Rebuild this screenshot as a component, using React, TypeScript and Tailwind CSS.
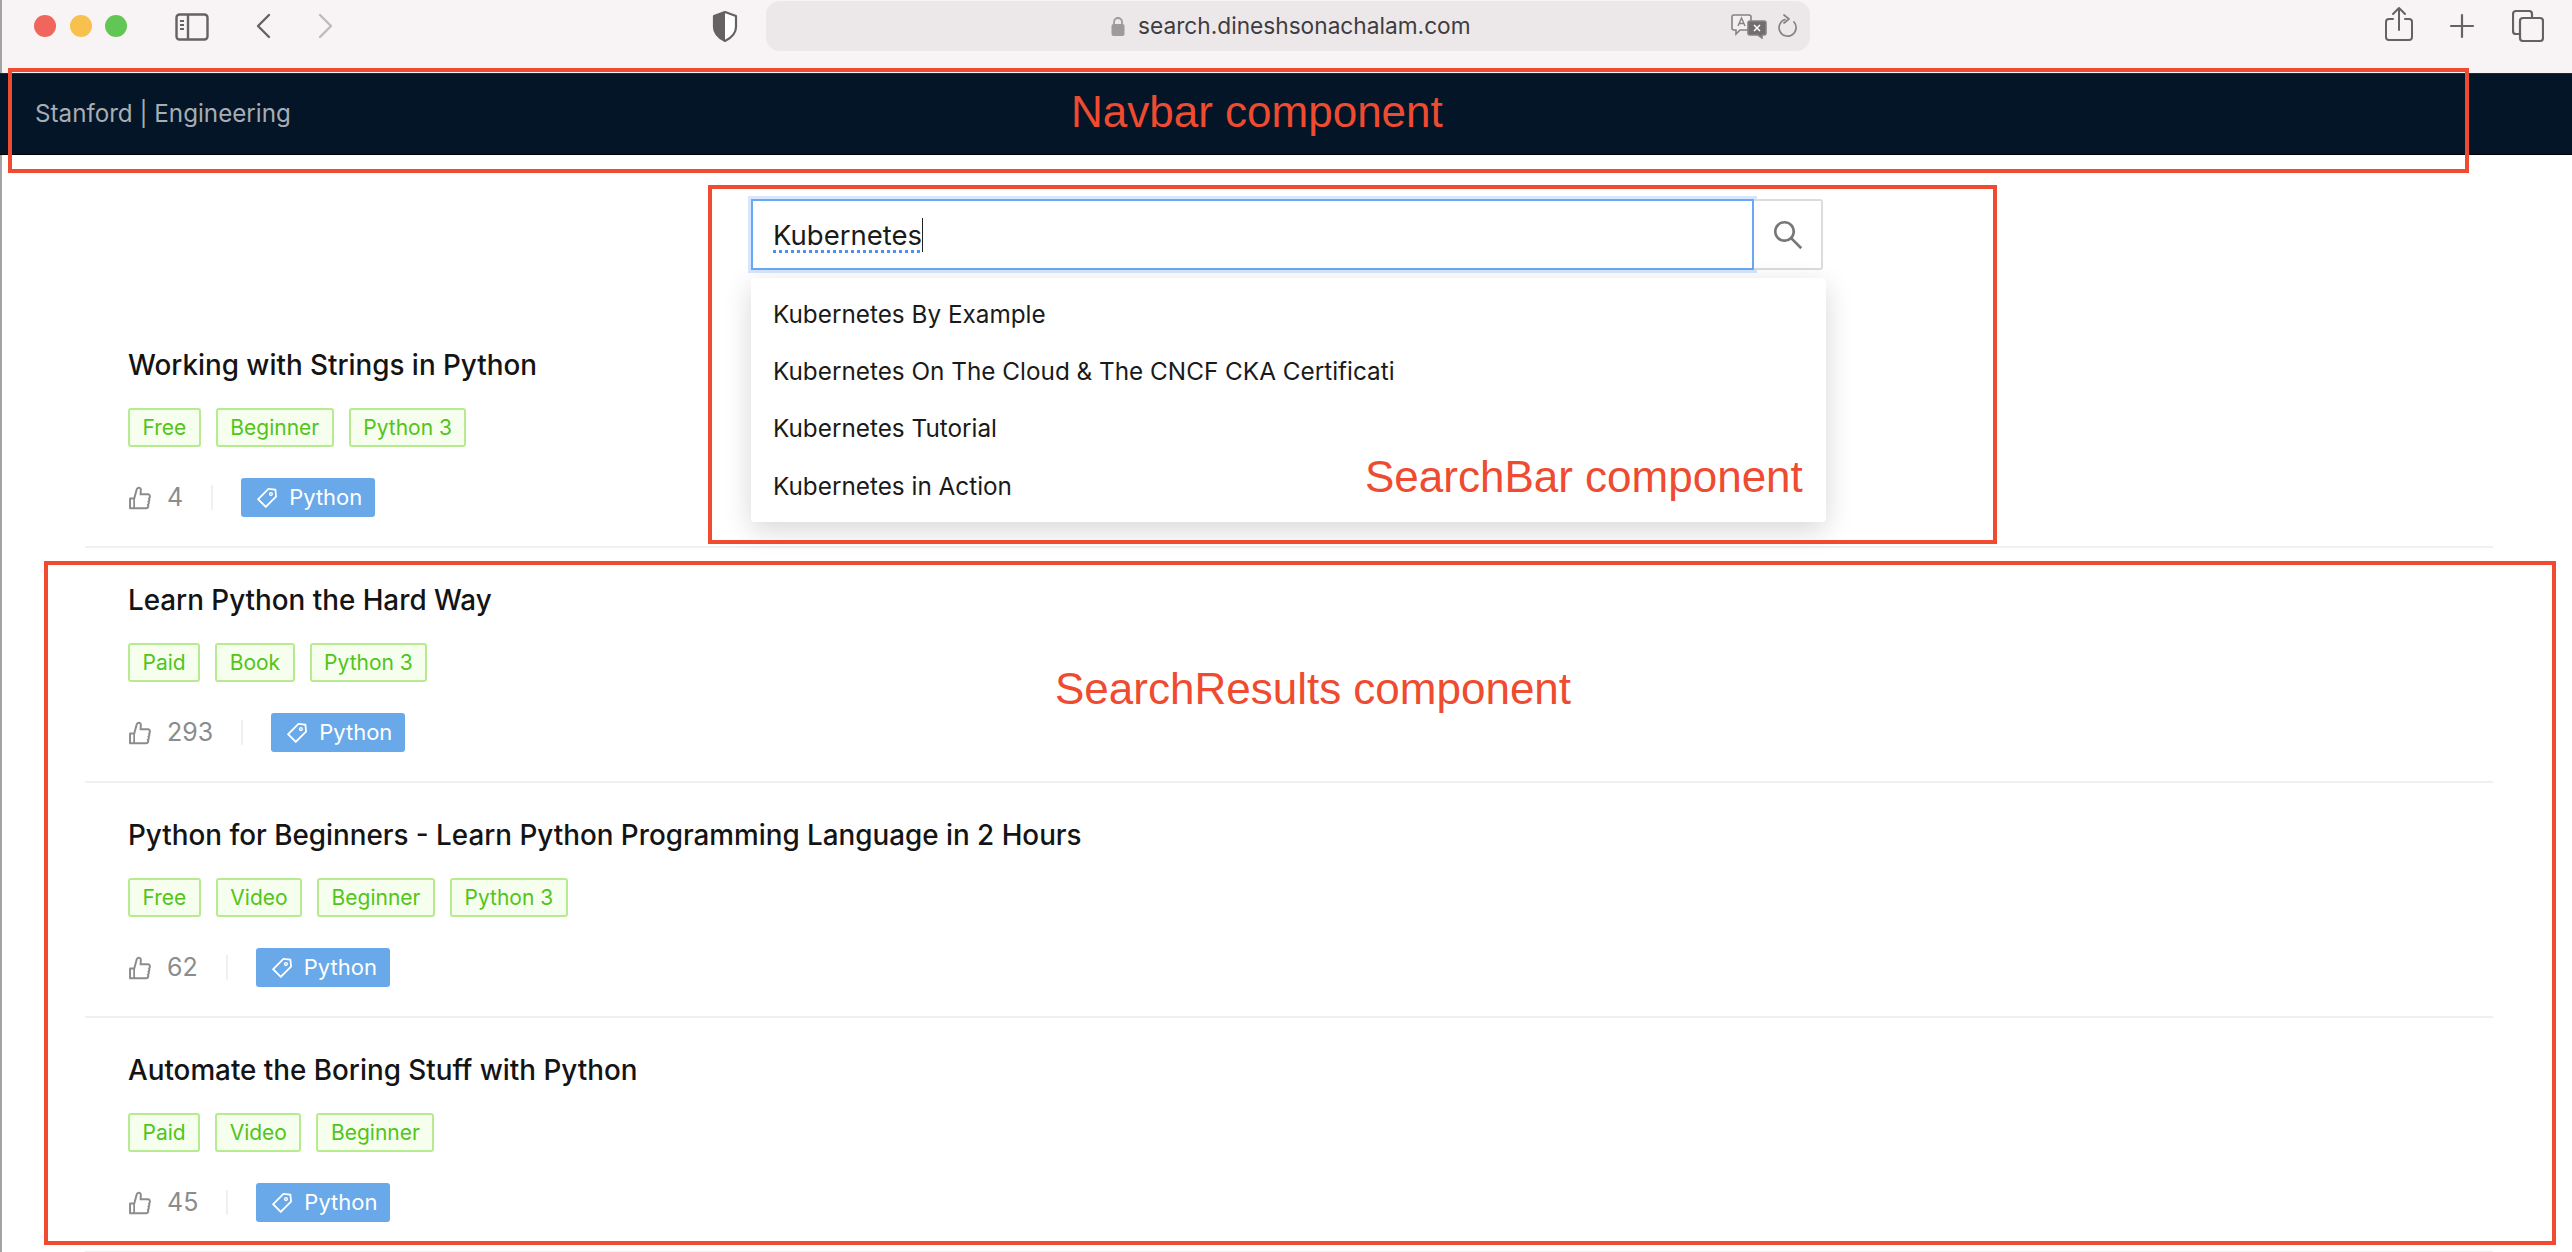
import React from 'react';
import { AiOutlineLike, AiOutlineSearch, AiOutlineTag } from 'react-icons/ai';

interface Course {
    title: string;
    tags: string[];
    likes: number;
}

const courses: Course[] = [
    { title: 'Working with Strings in Python', tags: ['Free', 'Beginner', 'Python 3'], likes: 4 },
    { title: 'Learn Python the Hard Way', tags: ['Paid', 'Book', 'Python 3'], likes: 293 },
    { title: 'Python for Beginners - Learn Python Programming Language in 2 Hours', tags: ['Free', 'Video', 'Beginner', 'Python 3'], likes: 62 },
    { title: 'Automate the Boring Stuff with Python', tags: ['Paid', 'Video', 'Beginner'], likes: 45 },
];

const suggestions = [
    'Kubernetes By Example',
    'Kubernetes On The Cloud & The CNCF CKA Certificati',
    'Kubernetes Tutorial',
    'Kubernetes in Action',
];

const BrowserBar: React.FC = () => (
    <div className="flex h-[73px] bg-[#f8f4f5] text-[#666164]">
        <div className="flex h-[52px] items-center w-full">
            <div className="ml-[34px] h-[22px] w-[22px] rounded-full bg-[#f0665c]" />
            <div className="ml-[14px] h-[22px] w-[22px] rounded-full bg-[#f8c14e]" />
            <div className="ml-[13px] h-[22px] w-[22px] rounded-full bg-[#62c654]" />
            <svg className="ml-[48px] mt-[1px]" width="34" height="28" viewBox="0 0 34 28" fill="none" stroke="currentColor" strokeWidth="2.4">
                <rect x="1.5" y="1.5" width="31" height="25" rx="3" />
                <path d="M13 2v24" />
                <path d="M5 8h4M5 12h4M5 16h4" strokeWidth="2" />
            </svg>
            <svg className="ml-[46px]" width="16" height="26" viewBox="0 0 16 26" fill="none" stroke="currentColor" strokeWidth="2.4" strokeLinecap="round" strokeLinejoin="round">
                <path d="M14 2 3 13l11 11" />
            </svg>
            <svg className="ml-[47px] text-[#bdbabb]" width="16" height="26" viewBox="0 0 16 26" fill="none" stroke="currentColor" strokeWidth="2.4" strokeLinecap="round" strokeLinejoin="round">
                <path d="m2 2 11 11L2 24" />
            </svg>
            <svg className="ml-[378px]" width="26" height="31" viewBox="0 0 26 31" fill="none">
                <path d="M13 1 2 5v11c0 6 5 11 11 14 6-3 11-8 11-14V5z" fill="#fff" stroke="currentColor" strokeWidth="2.2" strokeLinejoin="round" />
                <path d="M13 1 2 5v11c0 6 5 11 11 14z" fill="currentColor" />
            </svg>
            <div className="ml-[28px] flex h-[50px] w-[1044px] items-center rounded-[14px] bg-[#ece8e9]">
                <svg className="ml-[345px]" width="14" height="20" viewBox="0 0 14 20" fill="none">
                    <path d="M3 9V6a4 4 0 0 1 8 0v3" stroke="#9d9a9b" strokeWidth="1.8" />
                    <rect x="0.5" y="8" width="13" height="12" rx="2" fill="#9d9a9b" />
                </svg>
                <span className="ml-[13px] text-[22.7px] text-[#3f3c3e]">search.dineshsonachalam.com</span>
                <svg className="ml-[260px]" width="37" height="26" viewBox="0 0 37 26" fill="none" stroke="#858283" strokeWidth="1.6">
                    <path d="M3 2h15a2 2 0 0 1 2 2v11a2 2 0 0 1-2 2H9l-4 4v-4H3a2 2 0 0 1-2-2V4a2 2 0 0 1 2-2z" fill="#f3eff0" />
                    <path d="M7 13l3.5-8L14 13M8 10.5h5" strokeWidth="1.4" />
                    <path d="M19 8h14a2 2 0 0 1 2 2v10a2 2 0 0 1-2 2h-2v3l-4-3h-8a2 2 0 0 1-2-2V10a2 2 0 0 1 2-2z" fill="#706d6e" />
                    <path d="m23 12 6 6M29 12l-6 6" stroke="#fff" strokeWidth="1.5" />
                </svg>
                <svg className="ml-[10px]" width="20" height="24" viewBox="0 0 20 24" fill="none" stroke="#858283" strokeWidth="1.7" strokeLinecap="round" strokeLinejoin="round">
                    <path d="M7 5.5A8.5 8.5 0 1 0 16 8" />
                    <path d="M6 1l5 4-5 4" />
                </svg>
            </div>
            <svg className="ml-[575px] -mt-[6px]" width="28" height="35" viewBox="0 0 28 35" fill="none" stroke="currentColor" strokeWidth="2" strokeLinecap="round" strokeLinejoin="round">
                <path d="M8 13H4a3 3 0 0 0-3 3v15a3 3 0 0 0 3 3h20a3 3 0 0 0 3-3V16a3 3 0 0 0-3-3h-4" />
                <path d="M14 24V2M8 8l6-6 6 6" />
            </svg>
            <svg className="ml-[36px]" width="26" height="26" viewBox="0 0 26 26" fill="none" stroke="currentColor" strokeWidth="2.2" strokeLinecap="round">
                <path d="M13 2v22M2 13h22" />
            </svg>
            <svg className="ml-[37px]" width="32" height="32" viewBox="0 0 32 32" fill="none" stroke="currentColor" strokeWidth="2.2" strokeLinejoin="round">
                <path d="M7 24H4a3 3 0 0 1-3-3V4a3 3 0 0 1 3-3h13a3 3 0 0 1 3 3v4" />
                <rect x="8" y="8" width="23" height="23" rx="3" />
            </svg>
        </div>
    </div>
);

const Navbar: React.FC = () => (
    <nav className="relative z-10 flex h-[82px] items-center border-y border-b-black border-t-[#1f2a38] bg-[#041527] pl-[35px] text-[24.2px] text-[#a6adb4]">
        Stanford | Engineering
    </nav>
);

const SearchBar: React.FC = () => (
    <div className="relative z-20 h-[158px] pt-[44px] pl-[751px]">
        <div className="flex h-[71px] w-[1072px]">
            <div className="flex w-[1003px] items-center border-2 border-[#69a8f5] bg-white pl-[20px] text-[27.5px] text-[#1a1a1a] shadow-[0_0_0_3px_#d5e6fd]">
                <span className="border-r border-[#222] leading-[34px] underline decoration-dotted decoration-[#4d90f0] decoration-[3px] underline-offset-[5px]">Kubernetes</span>
            </div>
            <div className="flex flex-1 items-center justify-center rounded-r-[3px] border-2 border-l-0 border-[#dcdcdc] bg-white">
                <AiOutlineSearch className="text-[36px] text-[#777]" />
            </div>
        </div>
        <div className="absolute left-[751px] top-[123px] flex h-[244px] w-[1075px] flex-col justify-center rounded-[3px] bg-white shadow-[0_8px_28px_rgba(0,0,0,0.16)]">
            {suggestions.map((item) => (
                <div key={item} className="flex h-[57.3px] items-center pl-[22px] text-[24.3px] text-[#1a1a1a]">
                    {item}
                </div>
            ))}
        </div>
    </div>
);

const ResultRow: React.FC<{ course: Course }> = ({ course }) => (
    <div className="h-[235px] border-b-2 border-[#f0f0f0] pl-[43px] pt-[34px]">
        <div className="text-[27.8px] leading-[36px] font-[450] text-[#141414]">{course.title}</div>
        <div className="mt-[25px] flex gap-[15px]">
            {course.tags.map((tag) => (
                <span key={tag} className="flex h-[39px] items-center rounded-[3px] border-2 border-[#b7eb8f] bg-[#f6ffed] px-[12.5px] text-[21px] text-[#52c41a]">
                    {tag}
                </span>
            ))}
        </div>
        <div className="mt-[31px] flex h-[39px] items-center">
            <AiOutlineLike className="text-[28px] text-[#8c8c8c] -ml-[2px]" />
            <span className="ml-[13px] text-[25px] text-[#8c8c8c]">{course.likes}</span>
            <span className="ml-[28px] h-[25px] w-[2px] bg-[#f0f0f0]" />
            <span className="ml-[28px] flex h-[39px] w-[134px] items-center rounded-[3px] bg-[#69a8e9] pl-[14px] text-[22px] text-white">
                <AiOutlineTag className="mr-[10px] text-[24px]" />
                Python
            </span>
        </div>
    </div>
);

const App: React.FC = () => (
    <div className="relative h-[1252px] w-[2572px] overflow-hidden bg-white font-['Inter','Liberation_Sans',sans-serif]">
        <BrowserBar />
        <Navbar />
        <SearchBar />
        <div className="ml-[85px] w-[2408px]">
            {courses.map((course) => (
                <ResultRow key={course.title} course={course} />
            ))}
        </div>

        {/* strip of the desktop on the left edge */}
        <div className="absolute left-0 top-0 h-full w-[2px] bg-[#a3a3a3]" />

        {/* annotations drawn over the screenshot */}
        <div className="absolute z-30 left-[8px] top-[68px] h-[105px] w-[2461px] border-4 border-[#ee4b30]" />
        <div className="absolute z-30 left-[708px] top-[185px] h-[359px] w-[1289px] border-4 border-[#ee4b30]" />
        <div className="absolute z-30 left-[44px] top-[561px] h-[684px] w-[2512px] border-4 border-[#ee4b30]" />
        <div className="absolute z-30 left-[1071px] top-[84px] text-[44px] leading-[56px] text-[#ee4b30] font-['Liberation_Sans',sans-serif]">Navbar component</div>
        <div className="absolute z-30 left-[1365px] top-[449px] text-[44px] leading-[56px] text-[#ee4b30] font-['Liberation_Sans',sans-serif]">SearchBar component</div>
        <div className="absolute z-30 left-[1055px] top-[661px] text-[44px] leading-[56px] text-[#ee4b30] font-['Liberation_Sans',sans-serif]">SearchResults component</div>
    </div>
);

export default App;
